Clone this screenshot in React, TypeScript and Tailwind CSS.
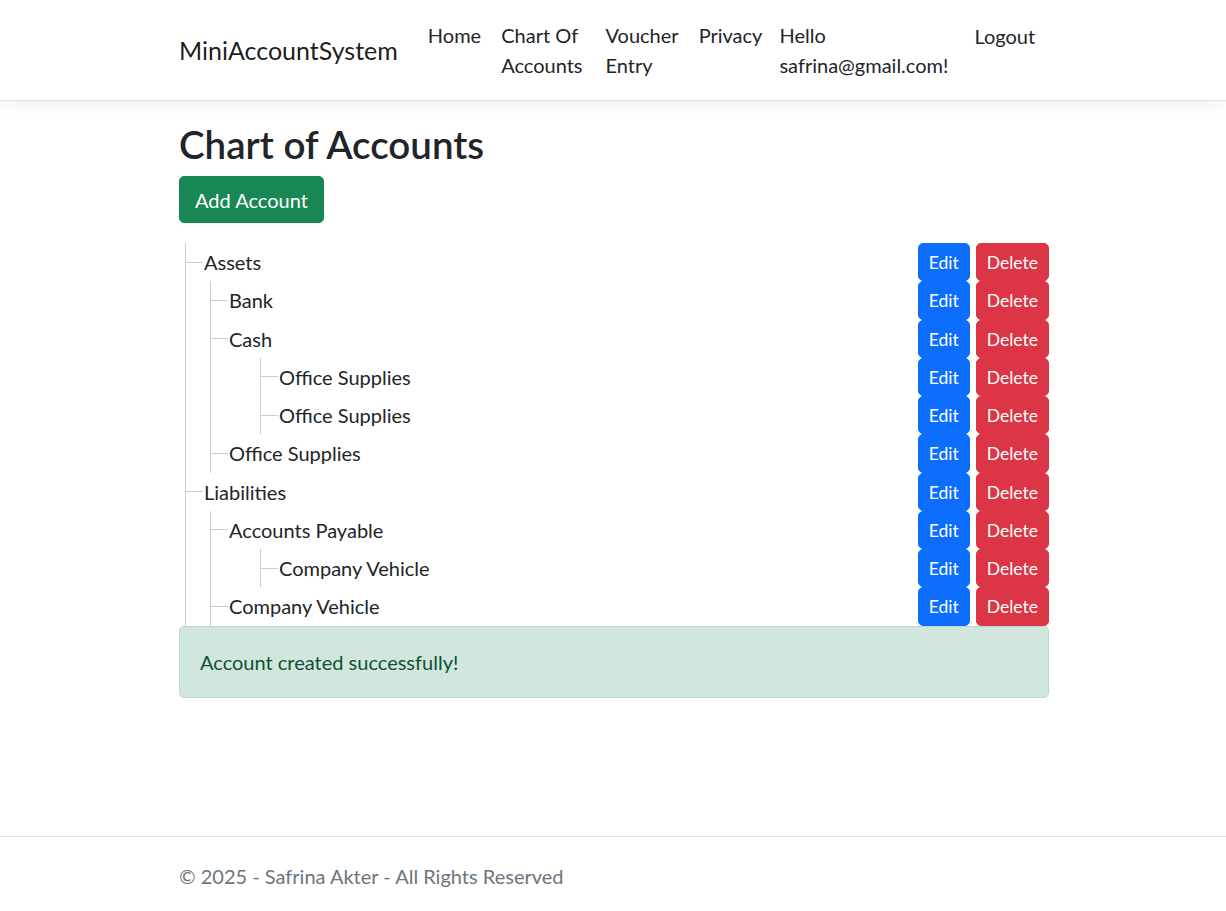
import React from "react";

type Account = {
  name: string;
  children?: Account[];
};

const accounts: Account[] = [
  {
    name: "Assets",
    children: [
      { name: "Bank" },
      {
        name: "Cash",
        children: [{ name: "Office Supplies" }, { name: "Office Supplies" }],
      },
      { name: "Office Supplies" },
    ],
  },
  {
    name: "Liabilities",
    children: [
      {
        name: "Accounts Payable",
        children: [{ name: "Company Vehicle" }],
      },
      { name: "Company Vehicle" },
    ],
  },
];

// margin of each nested list from its parent's content edge
const levelMargin = ["ml-[6px]", "ml-[24px]", "ml-[49px]"];

const TreeList = ({ items, level }: { items: Account[]; level: number }) => {
  return (
    <ul className={`${levelMargin[level]} border-l border-[#cccccc]`}>
      {items.map((item, i) => (
        <li key={i}>
          <div className="flex items-center justify-between">
            <div className="flex items-center">
              <span className="w-[17px] h-px bg-[#cccccc]" />
              <span className="pl-px">{item.name}</span>
            </div>
            <div className="flex gap-[6px]">
              <button className="bg-[#0d6efd] text-white text-[17.5px] leading-[26.25px] pt-[6px] pb-[4px] px-[10px] border border-[#0d6efd] rounded-[5px]">
                Edit
              </button>
              <button className="bg-[#dc3545] text-white text-[17.5px] leading-[26.25px] pt-[6px] pb-[4px] px-[10px] border border-[#dc3545] rounded-[5px]">
                Delete
              </button>
            </div>
          </div>
          {item.children && <TreeList items={item.children} level={level + 1} />}
        </li>
      ))}
    </ul>
  );
};

const App = () => {
  return (
    <div
      className="min-h-screen flex flex-col bg-white text-[#212529] text-[20px] leading-[30px]"
      style={{ fontFamily: 'Lato, "Open Sans", sans-serif' }}
    >
      {/* Navbar */}
      <nav className="bg-white border-b border-[#dee2e6] shadow-[0_5px_15px_rgba(0,0,0,0.05)] py-[10px] mb-[20px]">
        <div className="w-[900px] mx-auto pl-[16px] pr-[14px] flex items-center">
          <a className="text-[25px] leading-[37.5px] pt-[7px] pb-[5px] mr-[20px] text-black/90">
            MiniAccountSystem
          </a>
          <ul className="flex items-start">
            <li className="p-[10px]">Home</li>
            <li className="p-[10px]">
              Chart Of
              <br />
              Accounts
            </li>
            <li className="p-[10px] ml-[3px]">
              Voucher
              <br />
              Entry
            </li>
            <li className="p-[10px]">Privacy</li>
            <li className="py-[10px] pl-[7px] pr-[10px]">
              Hello
              <br />
              safrina@gmail.com!
            </li>
            <li className="pl-[16px] pr-[10px] pt-[11px]">Logout</li>
          </ul>
        </div>
      </nav>

      {/* Main */}
      <main className="w-[900px] mx-auto pl-[16px] pr-[14px]">
        <h2 className="text-[38.5px] leading-[45px] font-semibold pt-px mb-[9px]">
          Chart of Accounts
        </h2>
        <button className="bg-[#198754] text-white border border-[#198754] rounded-[5px] px-[15px] py-[7.5px] mb-[20px]">
          Add Account
        </button>
        <TreeList items={accounts} level={0} />
        <div className="bg-[#d1e7dd] border border-[#badbcc] text-[#0f5132] rounded-[5px] p-[20px]">
          Account created successfully!
        </div>
      </main>

      {/* Footer */}
      <footer className="mt-auto border-t border-[#dee2e6] text-[#6c757d] leading-[70px] pt-[4px]">
        <div className="w-[900px] mx-auto pl-[16px] pr-[14px]">
          © 2025 - Safrina Akter - All Rights Reserved
        </div>
      </footer>
    </div>
  );
};

export default App;
